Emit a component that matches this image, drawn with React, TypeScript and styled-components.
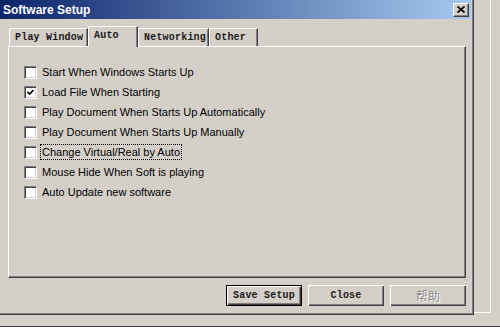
import React from 'react'
import styled, {createGlobalStyle} from 'styled-components'

const GlobalStyle = createGlobalStyle`
  html, body {
    margin: 0;
    padding: 0;
    background: #d4d0c8;
  }
  body {
    width: 500px;
    height: 327px;
    overflow: hidden;
  }
`

const Page = styled.div`
  width: 500px;
  height: 327px;
  box-sizing: border-box;
  display: flex;
  flex-direction: column;
  background: #d4d0c8;
  border-bottom: 1px solid #404040;
`

const Desk = styled.div`
  display: flex;
  height: 315px;
`

const Gutter = styled.div`
  flex: 1;
  display: flex;
`

// the edge of the window that sits behind this one
const BackFrame = styled.div`
  width: 17px;
  height: 313px;
  box-sizing: border-box;
  border-right: 1px solid #ffffff;
  border-bottom: 1px solid #ffffff;
`

const Window = styled.div`
  width: 474px;
  height: 315px;
  box-sizing: border-box;
  display: flex;
  flex-direction: column;
  border-right: 1px solid #404040;
  border-bottom: 1px solid #404040;
  box-shadow: inset -1px -1px 0 #808080;
`

const TitleBar = styled.div`
  height: 19px;
  margin-right: 2px;
  display: flex;
  align-items: center;
  justify-content: space-between;
  padding: 0 2px 0 3px;
  background: linear-gradient(to right, #0a246a, #a6caf0);
`

const TitleText = styled.span`
  font-family: 'Liberation Sans', Arial, sans-serif;
  font-weight: bold;
  font-size: 12px;
  color: #ffffff;
`

const CaptionButton = styled.div`
  width: 16px;
  height: 14px;
  box-sizing: border-box;
  display: flex;
  align-items: center;
  justify-content: center;
  background: #d4d0c8;
  border-top: 1px solid #ffffff;
  border-left: 1px solid #ffffff;
  border-right: 1px solid #404040;
  border-bottom: 1px solid #404040;
  box-shadow: inset -1px -1px 0 #808080;
`

const Body = styled.div`
  flex: 1;
  display: flex;
  flex-direction: column;
  padding: 7px 6px 0 8px;
`

const TabStrip = styled.div`
  height: 20px;
  display: flex;
  align-items: flex-end;
  padding-left: 1px;
`

const Tab = styled.div<{$width: number; $active?: boolean}>`
  position: relative;
  z-index: ${p => (p.$active ? 2 : 1)};
  width: ${p => p.$width}px;
  height: ${p => (p.$active ? 21 : 18)}px;
  margin-bottom: ${p => (p.$active ? -1 : 0)}px;
  box-sizing: border-box;
  display: flex;
  align-items: ${p => (p.$active ? 'flex-start' : 'center')};
  padding: ${p => (p.$active ? '3px 0 0 5px' : '0 0 0 5px')};
  background: #d4d0c8;
  border-top: 1px solid #ffffff;
  border-left: 1px solid #ffffff;
  border-right: 1px solid #404040;
  border-top-left-radius: 2px;
  box-shadow: inset -1px 0 0 #808080;
  font-family: 'Liberation Mono', 'Courier New', monospace;
  font-weight: bold;
  font-size: 10px;
  letter-spacing: 0.2px;
  color: #1a1a1a;
  white-space: nowrap;
`

const Panel = styled.div`
  width: 458px;
  height: 232px;
  box-sizing: border-box;
  display: flex;
  flex-direction: column;
  padding: 15px 0 0 15px;
  border-top: 1px solid #ffffff;
  border-left: 1px solid #ffffff;
  border-right: 1px solid #404040;
  border-bottom: 1px solid #404040;
  box-shadow: inset -1px -1px 0 #808080;
`

const Row = styled.label`
  height: 20px;
  display: flex;
  align-items: center;
  gap: 5px;
  font-family: 'Liberation Sans', Arial, sans-serif;
  font-size: 11px;
  color: #000000;
`

const Box = styled.span`
  width: 13px;
  height: 13px;
  box-sizing: border-box;
  display: flex;
  align-items: center;
  justify-content: center;
  flex-shrink: 0;
  background: #ffffff;
  border-top: 1px solid #808080;
  border-left: 1px solid #808080;
  border-right: 1px solid #ffffff;
  border-bottom: 1px solid #ffffff;
  box-shadow: inset 1px 1px 0 #404040, inset -1px -1px 0 #d4d0c8;
`

const Label = styled.span<{$focused?: boolean}>`
  padding: 1px;
  margin-left: -2px;
  border: 1px dotted ${p => (p.$focused ? '#000000' : 'transparent')};
`

const ButtonRow = styled.div`
  width: 458px;
  display: flex;
  justify-content: flex-end;
  gap: 6px;
  margin-top: 7px;
`

const Button = styled.div<{$default?: boolean; $disabled?: boolean}>`
  width: 76px;
  height: 21px;
  box-sizing: border-box;
  display: flex;
  align-items: center;
  justify-content: center;
  background: #d4d0c8;
  border: ${p => (p.$default ? '1px solid #000000' : 'none')};
  box-shadow: inset 1px 1px 0 #ffffff, inset -1px -1px 0 #404040,
    inset -2px -2px 0 #808080;
  font-family: 'Liberation Mono', 'Courier New', monospace;
  font-weight: bold;
  font-size: 10px;
  letter-spacing: 0.2px;
  color: ${p => (p.$disabled ? '#8a8a8a' : '#1a1a1a')};
  text-shadow: ${p => (p.$disabled ? '1px 1px 0 #ffffff' : 'none')};
`

const CjkText = styled.span`
  font-family: 'Noto Sans CJK SC', sans-serif;
  font-weight: normal;
  font-size: 12px;
`

const CloseGlyph = () => (
  <svg width="8" height="7" viewBox="0 0 8 7">
    <path d="M0.5 0.5 L7.5 6.5 M7.5 0.5 L0.5 6.5" stroke="#000" strokeWidth="1.8" />
  </svg>
)

const CheckGlyph = () => (
  <svg width="7" height="7" viewBox="0 0 7 7">
    <path d="M0.5 2.8 L2.6 5 L6.5 1" stroke="#000" strokeWidth="1.6" fill="none" />
  </svg>
)

type Option = {label: string; checked?: boolean; focused?: boolean}

const options: Option[] = [
  {label: 'Start When Windows Starts Up'},
  {label: 'Load File When Starting', checked: true},
  {label: 'Play Document When Starts Up Automatically'},
  {label: 'Play Document When Starts Up Manually'},
  {label: 'Change Virtual/Real by Auto', focused: true},
  {label: 'Mouse Hide When Soft is playing'},
  {label: 'Auto Update new software'},
]

const tabs = [
  {label: 'Play Window', width: 79},
  {label: 'Auto', width: 50, active: true},
  {label: 'Networking', width: 71},
  {label: 'Other', width: 49},
]

export default function App() {
  return (
    <Page>
      <GlobalStyle />
      <Desk>
        <Window>
          <TitleBar>
            <TitleText>Software Setup</TitleText>
            <CaptionButton>
              <CloseGlyph />
            </CaptionButton>
          </TitleBar>
          <Body>
            <TabStrip>
              {tabs.map(t => (
                <Tab key={t.label} $width={t.width} $active={t.active}>
                  {t.label}
                </Tab>
              ))}
            </TabStrip>
            <Panel>
              {options.map(o => (
                <Row key={o.label}>
                  <Box>{o.checked && <CheckGlyph />}</Box>
                  <Label $focused={o.focused}>{o.label}</Label>
                </Row>
              ))}
            </Panel>
            <ButtonRow>
              <Button $default>Save Setup</Button>
              <Button>Close</Button>
              <Button $disabled>
                <CjkText>帮助</CjkText>
              </Button>
            </ButtonRow>
          </Body>
        </Window>
        <Gutter>
          <BackFrame />
        </Gutter>
      </Desk>
    </Page>
  )
}
